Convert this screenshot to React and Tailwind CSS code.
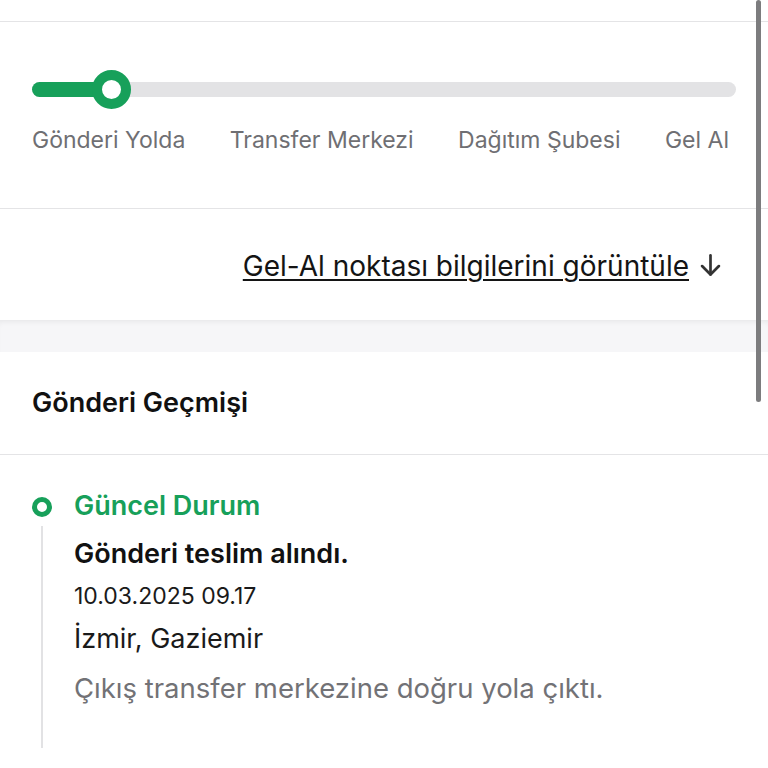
import React from "react";

const steps = ["Gönderi Yolda", "Transfer Merkezi", "Dağıtım Şubesi", "Gel Al"];

export default function App() {
  return (
    <div className="relative min-h-screen bg-white font-['Inter','Noto_Sans',sans-serif] overflow-hidden">
      {/* top strip */}
      <div className="h-[22px] border-b border-[#e4e4e6]" />

      {/* progress */}
      <div className="h-[187px] border-b border-[#e4e4e6] pt-[60px]">
        <div className="ml-8 mr-8 relative h-[15px] rounded-full bg-[#e3e3e5]">
          <div className="absolute left-0 top-0 h-[15px] w-[80px] rounded-full bg-[#17a05a]" />
          <div className="absolute left-[60px] top-[-12px] h-[39px] w-[39px] rounded-full border-[10px] border-[#17a05a] bg-white" />
        </div>
        <div className="mt-[26px] flex justify-between pl-8 pr-[39px] text-[23px] leading-[34px] text-[#6f6f73]">
          {steps.map((s) => (
            <span key={s}>{s}</span>
          ))}
        </div>
      </div>

      {/* link row */}
      <div className="h-[111px] flex items-center justify-end pr-[44px] pt-[2px]">
        <a className="text-[28px] leading-[34px] text-[#141414] underline underline-offset-[3px] decoration-[1.5px]">
          Gel-Al noktası bilgilerini görüntüle
        </a>
        <svg className="ml-[8px]" width="27" height="27" viewBox="0 0 24 24" fill="none" stroke="#333" strokeWidth="2.4" strokeLinecap="round" strokeLinejoin="round">
          <path d="M12 3v17" />
          <path d="M4.5 12.5 12 20l7.5-7.5" />
        </svg>
      </div>

      {/* separator band */}
      <div className="h-[32px] bg-[#f6f6f8] shadow-[inset_0_5px_6px_-4px_rgba(0,0,0,0.08)]" />

      {/* history heading */}
      <div className="h-[103px] flex items-center px-8 border-b border-[#e4e4e6]">
        <h2 className="text-[27px] leading-[34px] font-semibold text-[#111]">Gönderi Geçmişi</h2>
      </div>

      {/* timeline */}
      <div className="flex px-8 pt-[36px]">
        <div className="flex flex-col items-center w-[20px] pt-[6px]">
          <div className="h-[20px] w-[20px] rounded-full border-[5px] border-[#17a05a]" />
          <div className="mt-[9px] w-[2px] h-[222px] bg-[#e2e2e4]" />
        </div>
        <div className="ml-[22px] flex flex-col">
          <div className="text-[27px] leading-[30px] font-semibold text-[#17a05a]">Güncel Durum</div>
          <div className="mt-[18px] text-[27px] leading-[30px] font-semibold text-[#111]">Gönderi teslim alındı.</div>
          <div className="mt-[12px] text-[23px] leading-[30px] text-[#1a1a1a]">10.03.2025 09.17</div>
          <div className="mt-[13px] text-[27px] leading-[30px] text-[#1a1a1a]">İzmir, Gaziemir</div>
          <div className="mt-[19px] text-[27.5px] leading-[30px] text-[#727276]">Çıkış transfer merkezine doğru yola çıktı.</div>
        </div>
      </div>

      {/* scrollbar overlay */}
      <div className="absolute right-[7px] top-0 h-[402px] w-[5px] rounded-full bg-[#7c7c7e]" />
    </div>
  );
}
